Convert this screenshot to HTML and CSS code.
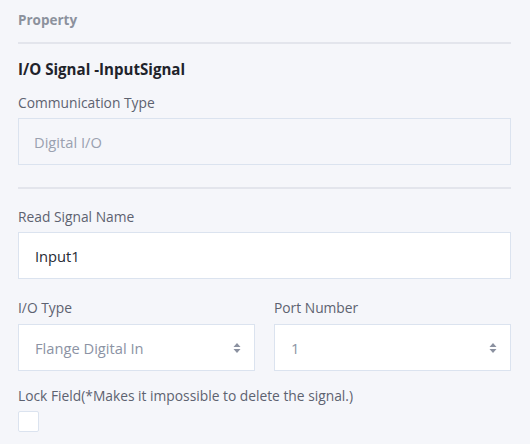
FILE: index.html
```html
<!DOCTYPE html>
<html>
<head>
<meta charset="utf-8">
<link rel="stylesheet" href="styles.css">
</head>
<body>
<div class="panel">
  <div class="panel-head">Property</div>
  <div class="divider"></div>
  <div class="title">I/O Signal -InputSignal</div>
  <div class="field">
    <div class="label">Communication Type</div>
    <div class="box box-disabled">Digital I/O</div>
  </div>
  <div class="divider divider-2"></div>
  <div class="field field-read">
    <div class="label">Read Signal Name</div>
    <div class="box box-input">Input1</div>
  </div>
  <div class="row">
    <div class="field">
      <div class="label">I/O Type</div>
      <div class="box box-select"><span>Flange Digital In</span>
        <svg class="arrows" width="8" height="12" viewBox="0 0 8 12"><path d="M4 1 L7.5 5 H0.5 Z" fill="#8b91a0"/><path d="M4 11 L7.5 7 H0.5 Z" fill="#8b91a0"/></svg>
      </div>
    </div>
    <div class="field">
      <div class="label">Port Number</div>
      <div class="box box-select"><span>1</span>
        <svg class="arrows" width="8" height="12" viewBox="0 0 8 12"><path d="M4 1 L7.5 5 H0.5 Z" fill="#8b91a0"/><path d="M4 11 L7.5 7 H0.5 Z" fill="#8b91a0"/></svg>
      </div>
    </div>
  </div>
  <div class="field field-lock">
    <div class="label">Lock Field(*Makes it impossible to delete the signal.)</div>
    <div class="checkbox"></div>
  </div>
</div>
</body>
</html>
```
FILE: styles.css
```css
html, body {
  margin: 0;
  padding: 0;
  background: #f5f6fa;
}
body {
  font-family: "Open Sans", "Liberation Sans", sans-serif;
  color: #5d6270;
}
.panel {
  width: 493px;
  padding: 10px 19px 0 18px;
  display: flex;
  flex-direction: column;
}
.panel-head {
  font-size: 13.5px;
  font-weight: 700;
  line-height: 20px;
  color: #8c919d;
}
.divider {
  height: 2px;
  background: #e3e5ec;
  margin-top: 12px;
}
.divider-2 {
  margin-top: 22px;
}
.title {
  margin-top: 14px;
  font-size: 15.1px;
  font-weight: 700;
  line-height: 22px;
  color: #1f232b;
  margin-bottom: 13px;
}
.field {
  display: flex;
  flex-direction: column;
  gap: 5px;
  min-width: 0;
}
.label {
  font-size: 13.8px;
  line-height: 20px;
  color: #5d6270;
}
.box {
  box-sizing: border-box;
  height: 47px;
  border: 1px solid #dbe3ef;
  display: flex;
  align-items: center;
  padding: 0 16px 0 16px;
  font-size: 14.7px;
}
.box-disabled {
  background: #f5f6fa;
  color: #9aa1b0;
  padding-left: 15px;
}
.box-input {
  background: #ffffff;
  color: #262a33;
}
.field-read {
  margin-top: 18px;
}
.row {
  display: grid;
  grid-template-columns: 1fr 1fr;
  gap: 19px;
  margin-top: 19px;
}
.row .field {
  gap: 6px;
}
.box-select {
  background: #ffffff;
  color: #8c93a4;
  justify-content: space-between;
  padding-right: 13px;
}
.field-lock {
  margin-top: 15px;
}
.checkbox {
  width: 21px;
  height: 21px;
  box-sizing: border-box;
  background: #ffffff;
  border: 1px solid #dbe3ef;
  border-radius: 2px;
}
```
